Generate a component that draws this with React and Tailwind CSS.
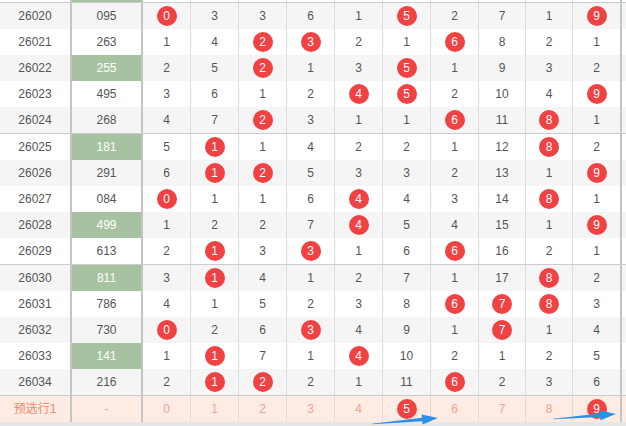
import React from 'react';

const rows = [
  { id: '26020', num: '095', vals: [0, 3, 3, 6, 1, 5, 2, 7, 1, 9] },
  { id: '26021', num: '263', vals: [1, 4, 2, 3, 2, 1, 6, 8, 2, 1] },
  { id: '26022', num: '255', green: true, vals: [2, 5, 2, 1, 3, 5, 1, 9, 3, 2] },
  { id: '26023', num: '495', vals: [3, 6, 1, 2, 4, 5, 2, 10, 4, 9] },
  { id: '26024', num: '268', vals: [4, 7, 2, 3, 1, 1, 6, 11, 8, 1] },
  { id: '26025', num: '181', green: true, vals: [5, 1, 1, 4, 2, 2, 1, 12, 8, 2] },
  { id: '26026', num: '291', vals: [6, 1, 2, 5, 3, 3, 2, 13, 1, 9] },
  { id: '26027', num: '084', vals: [0, 1, 1, 6, 4, 4, 3, 14, 8, 1] },
  { id: '26028', num: '499', green: true, vals: [1, 2, 2, 7, 4, 5, 4, 15, 1, 9] },
  { id: '26029', num: '613', vals: [2, 1, 3, 3, 1, 6, 6, 16, 2, 1] },
  { id: '26030', num: '811', green: true, vals: [3, 1, 4, 1, 2, 7, 1, 17, 8, 2] },
  { id: '26031', num: '786', vals: [4, 1, 5, 2, 3, 8, 6, 7, 8, 3] },
  { id: '26032', num: '730', vals: [0, 2, 6, 3, 4, 9, 1, 7, 1, 4] },
  { id: '26033', num: '141', green: true, vals: [1, 1, 7, 1, 4, 10, 2, 1, 2, 5] },
  { id: '26034', num: '216', vals: [2, 1, 2, 2, 1, 11, 6, 2, 3, 6] },
];

const gridCols = 'grid grid-cols-[72px_71px_48px_48px_48px_48px_48px_48px_48px_47px_47px_49px]';

const Ball = ({ n }) => (
  <span className="flex h-5 w-5 items-center justify-center rounded-full bg-[#f04242] text-[12px] text-white">
    {n}
  </span>
);

const Cell = ({ children, className = '' }) => (
  <div className={`flex items-center justify-center border-r border-[#dcdcdc] ${className}`}>{children}</div>
);

const Row = ({ row, index, last }) => {
  const bg = index % 2 === 0 ? 'bg-[#f5f5f5]' : 'bg-white';
  const digits = row.num ? row.num.split('').map(Number) : [];
  return (
    <div className={`${gridCols} ${bg} ${last ? 'h-[27px] border-b border-[#cccccc]' : 'h-[26px]'}`}>
      <Cell className="border-r-2 border-r-[#c4c4c4]">{row.id}</Cell>
      <Cell className={`border-r-2 border-r-[#c4c4c4] ${row.green ? 'bg-[#a7c2a0] text-white' : ''}`}>{row.num}</Cell>
      {row.vals.map((v, i) => (
        <Cell key={i} className={i === 9 ? 'border-r-2 border-r-[#c4c4c4]' : ''}>
          {digits.includes(i) ? <Ball n={i} /> : v}
        </Cell>
      ))}
    </div>
  );
};

export default function App() {
  return (
    <div
      className="relative h-[426px] w-[626px] overflow-hidden bg-white text-[12px] text-[#555]"
      style={{ fontFamily: '"Liberation Sans", Arial, "Noto Sans CJK SC", sans-serif' }}
    >
      <div className="-mt-[24px]">
        {/* previous row, scrolled almost out of view */}
        <Row row={{ id: '', num: '', green: true, vals: ['', '', '', '', '', '', '', '', '', ''] }} index={1} last />
        {rows.map((row, i) => (
          <Row key={row.id} row={row} index={i} last={i % 5 === 4} />
        ))}

        {/* preselect row */}
        <div className={`${gridCols} h-[26px] bg-[#fdebe4] text-[#f3a58c]`}>
          <Cell className="border-r-2 border-r-[#c4c4c4] text-[#f08a6c]">预选行1</Cell>
          <Cell className="border-r-2 border-r-[#c4c4c4]">-</Cell>
          {[0, 1, 2, 3, 4, 5, 6, 7, 8, 9].map((n) => (
            <Cell key={n} className={n === 9 ? 'border-r-2 border-r-[#c4c4c4]' : ''}>
              {n === 5 || n === 9 ? <Ball n={n} /> : n}
            </Cell>
          ))}
        </div>
        <div className="h-[6px] bg-[#e6e6e6]" />
      </div>

      {/* arrows drawn over the bottom row */}
      <svg className="pointer-events-none absolute left-0 top-0" width="626" height="426">
        <polygon
          fill="#2e8fe6"
          points="372,423.7 421.9,417.7 421.6,414.5 438,418 422.6,424.4 422.3,421.2 372,424.3"
        />
        <polygon
          fill="#2e8fe6"
          points="553,418.7 599.9,413.5 599.6,410.3 616,414 600.4,420.3 600.2,417.1 553,419.3"
        />
      </svg>
    </div>
  );
}
